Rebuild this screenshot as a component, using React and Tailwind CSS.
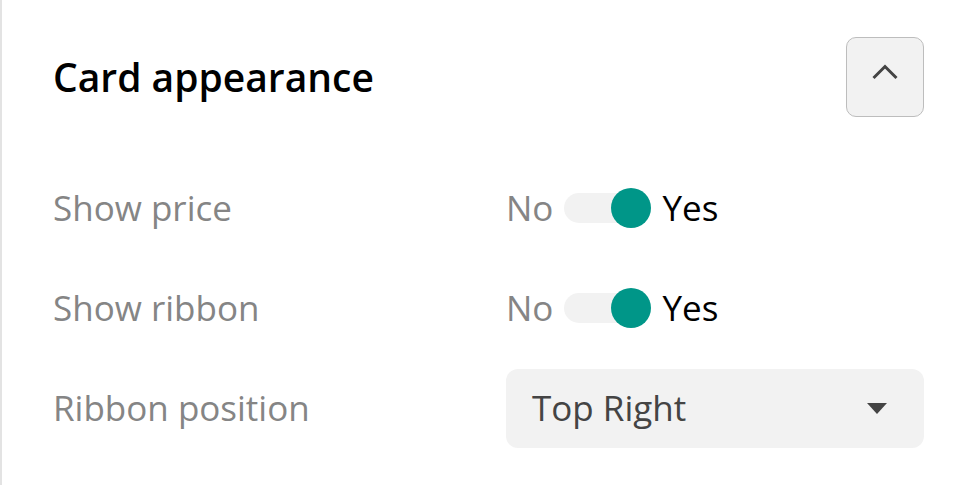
const Toggle = ({ on }) => (
    <div className="flex items-center gap-[11px]">
        <span className="text-[#858585]">No</span>
        <div className="relative w-[87px] h-[40px] flex items-center">
            <div className="w-[80px] h-[30px] rounded-full bg-[#f2f2f2]" />
            {on && <div className="absolute right-0 top-0 w-[40px] h-[40px] rounded-full bg-[#009688]" />}
        </div>
        <span className="text-black">Yes</span>
    </div>
);

const Row = ({ label, children }) => (
    <div className="flex items-center h-[80px]">
        <div className="w-[453px] text-[#858585]">{label}</div>
        <div className="flex-1">{children}</div>
    </div>
);

export default function App() {
    return (
        <div
            className="w-[958px] h-[485px] bg-white border-l-2 border-[#e3e3e3] pl-[51px] pr-[34px] pt-[37px] text-[35px] leading-[1.2] overflow-hidden"
            style={{ fontFamily: '"Open Sans", "Noto Sans", sans-serif' }}
        >
            {/* Cabecera */}
            <div className="flex items-center justify-between h-[80px]">
                <h2 className="text-[39px] font-semibold text-black">Card appearance</h2>
                <button className="w-[78px] h-[80px] rounded-[10px] border-[1.5px] border-[#bdbdbd] bg-[#f2f2f2] flex items-center justify-center">
                    <svg width="26" height="16" viewBox="0 0 26 16" className="-mt-[10px]">
                        <polyline points="1.5,14 13,2.5 24.5,14" fill="none" stroke="#444" strokeWidth="3" />
                    </svg>
                </button>
            </div>

            {/* Opciones */}
            <div className="mt-[51px] flex flex-col gap-5">
                <Row label="Show price"><Toggle on /></Row>
                <Row label="Show ribbon"><Toggle on /></Row>
                <Row label="Ribbon position">
                    <div className="h-[79px] rounded-[12px] bg-[#f2f2f2] flex items-center justify-between pl-[26px] pr-[37px]">
                        <span className="text-[#444]">Top Right</span>
                        <svg width="20" height="11" viewBox="0 0 20 11"><path d="M0 0 L20 0 L10 11 Z" fill="#444" /></svg>
                    </div>
                </Row>
            </div>
        </div>
    );
}
